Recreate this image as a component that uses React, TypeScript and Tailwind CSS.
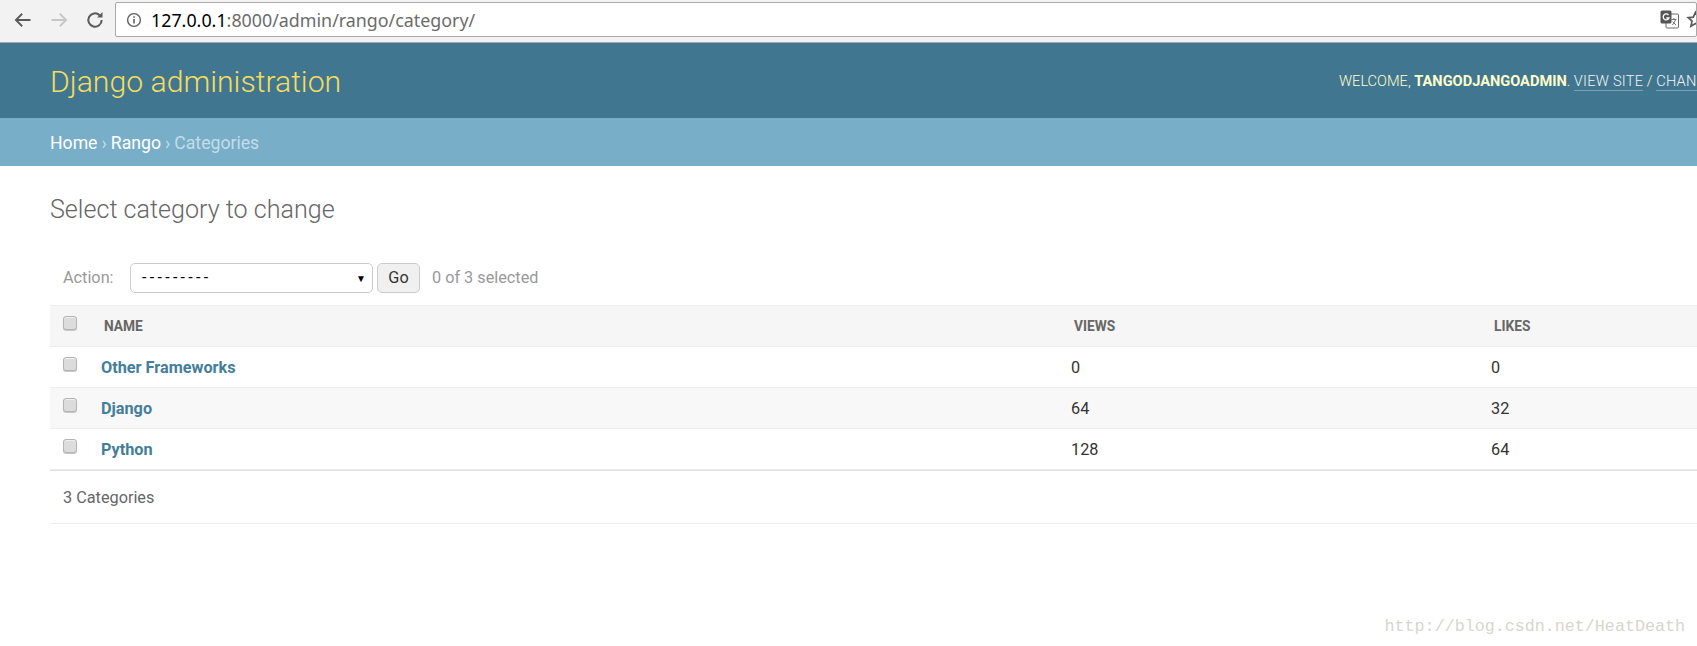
const rows = [
  { name: 'Other Frameworks', views: '0', likes: '0', bg: 'bg-white' },
  { name: 'Django', views: '64', likes: '32', bg: 'bg-[#f8f8f8]' },
  { name: 'Python', views: '128', likes: '64', bg: 'bg-white' },
];

function Checkbox() {
  return (
    <span className="block w-[14px] h-[14px] rounded-[3px] border border-[#b4b4b4] bg-[#dcdcdc] shadow-[inset_0_1px_0_#efefef,0_1px_0_#c8c8c8]" />
  );
}

function BrowserBar() {
  return (
    <div className="flex items-start h-[43px] bg-[#f2f2f2] border-b border-[#a8a8a8] pt-[2px]">
      <div className="flex items-center h-[35px] w-[115px] shrink-0 pl-[13px] gap-[16px]">
        <svg width="20" height="20" viewBox="0 0 24 24" fill="none" stroke="#5a5a5a" strokeWidth="2.2">
          <path d="M21 12H4M11 4.500 3.500 12l7.500 7.500" />
        </svg>
        <svg width="20" height="20" viewBox="0 0 24 24" fill="none" stroke="#c6c6c6" strokeWidth="2.2">
          <path d="M3 12h17M13 4.500l7.500 7.500-7.500 7.500" />
        </svg>
        <svg width="20" height="20" viewBox="0 0 24 24" fill="none" stroke="#5a5a5a" strokeWidth="2.4">
          <path d="M20 12a8 8 0 1 1-2.500-5.800" />
          <path d="M21 2.500V9h-6.500z" fill="#5a5a5a" stroke="none" />
        </svg>
      </div>
      <div className="flex-1 h-[35px] flex items-center bg-white border border-[#a9a9a9] rounded-[2px] pl-[10px] overflow-hidden">
        <svg width="16" height="16" viewBox="0 0 16 16" fill="none" className="shrink-0">
          <circle cx="8" cy="8" r="6.400" stroke="#5f5f5f" strokeWidth="1.4" />
          <path d="M8 7v4.400" stroke="#5f5f5f" strokeWidth="1.6" />
          <path d="M8 4.200v1.600" stroke="#5f5f5f" strokeWidth="1.6" />
        </svg>
        <div className="ml-[9px] mt-[2px] font-['Noto_Sans',sans-serif] text-[17.850px] text-[#6b6b6b] whitespace-nowrap">
          <span className="text-black">127.0.0.1</span>:8000/admin/rango/category/
        </div>
        <div className="ml-auto flex items-center gap-[7px] shrink-0 -mr-[9px]">
          <svg width="19" height="19" viewBox="0 0 19 19">
            <rect x="6" y="4" width="12.500" height="14" rx="1" fill="#fff" stroke="#6a6a6a" />
            <rect x="0.500" y="0.500" width="11" height="13" rx="1.500" fill="#555" />
            <path d="M8.500 5A3 3 0 1 0 9 8H6.300" fill="none" stroke="#fff" strokeWidth="1.3" />
            <path d="M11.500 9.500h5M14 8v1.500M12.500 15l3-5M12.500 11.500l3.500 3.500" fill="none" stroke="#666" strokeWidth="0.9" />
          </svg>
          <svg width="19" height="19" viewBox="0 0 24 24" fill="none" stroke="#5a5a5a" strokeWidth="2.2" className="shrink-0">
            <path d="m12 3 2.800 6 6.400.7-4.800 4.300 1.400 6.400L12 17l-5.800 3.400 1.400-6.400L2.800 9.700 9.200 9z" />
          </svg>
        </div>
      </div>
    </div>
  );
}

export default function App() {
  return (
    <div className="relative h-[646px] w-full overflow-hidden bg-white font-['Roboto',sans-serif] text-[#333]">
      <BrowserBar />

      <div className="flex items-center justify-between h-[75px] bg-[#417690] pl-[50px]">
        <h1 className="mt-[2px] text-[30.200px] font-light text-[#f5dd5d]">Django administration</h1>
        <div className="w-[358px] shrink-0 mt-[2px] whitespace-nowrap text-[14.600px] text-[#ffc] font-light">
          WELCOME, <strong className="font-bold">TANGODJANGOADMIN</strong>.{' '}
          <span className="text-[#f4f4f4] tracking-[0.25px] border-b border-white/30 pb-[0px]">VIEW SITE</span> /{' '}
          <span className="text-[#f4f4f4] tracking-[0.25px] border-b border-white/30 pb-[0px]">CHAN</span>
        </div>
      </div>

      <div className="flex items-center h-[48px] bg-[#79aec8] pl-[50px] pt-[2px] text-[17.650px] text-[#c4dce8]">
        <span className="text-white">Home</span>
        <span className="mx-[4px]">›</span>
        <span className="text-white">Rango</span>
        <span className="mx-[4px]">›</span>
        <span>Categories</span>
      </div>

      <main className="pl-[50px]">
        <h2 className="pt-[29px] text-[25.100px] leading-[30px] font-light text-[#666]">Select category to change</h2>

        <div className="flex items-center mt-[38px] h-[30px] pl-[13px] text-[16.250px] text-[#999]">
          <span className="w-[67px]">Action:</span>
          <div className="flex items-center justify-between w-[243px] h-[30px] bg-white border border-[#ccc] rounded-[5px] pl-[11px] pr-[6px] text-[#000]">
            <span className="text-[16px] tracking-[3.300px]">---------</span>
            <span className="text-[10px]">▼</span>
          </div>
          <div className="flex items-center justify-center ml-[4px] w-[43px] h-[30px] rounded-[5px] border border-[#ccc] bg-[#f0f0f0] text-[#333]">Go</div>
          <span className="ml-[12px]">0 of 3 selected</span>
        </div>

        <table className="w-full mt-[12px] border-collapse table-fixed text-[16.250px]">
          <thead>
            <tr className="h-[41px] bg-[#f6f6f6] border-t border-b border-[#eee]">
              <th className="w-[45px] pl-[13px] align-middle"><div className="-mt-[6px]"><Checkbox /></div></th>
              <th className="w-[979px] pl-[9px] text-left text-[13.750px] font-bold text-[#666]">NAME</th>
              <th className="w-[420px] text-left text-[13.750px] font-bold text-[#666]">VIEWS</th>
              <th className="text-left text-[13.750px] font-bold text-[#666]">LIKES</th>
            </tr>
          </thead>
          <tbody>
            {rows.map((row) => (
              <tr key={row.name} className={`h-[41px] ${row.bg} border-b border-[#eee]`}>
                <td className="pl-[13px] align-middle"><div className="-mt-[6px]"><Checkbox /></div></td>
                <td className="pl-[6px] pt-[2px] font-bold text-[#447e9b]">{row.name}</td>
                <td className="pt-[2px]"><span className="inline-block -ml-[3px]">{row.views}</span></td>
                <td className="pt-[2px]"><span className="inline-block -ml-[3px]">{row.likes}</span></td>
              </tr>
            ))}
          </tbody>
        </table>

        <div className="flex items-center h-[54px] pl-[13px] pt-[3px] border-t border-b border-t-[#ddd] border-b-[#eee] text-[16.250px] text-[#666]">3 Categories</div>
      </main>

      <div className="absolute right-[12px] top-[614px] font-['Liberation_Mono',monospace] text-[16.700px] text-[#d6d6d0]">
        http://blog.csdn.net/HeatDeath
      </div>
    </div>
  );
}
